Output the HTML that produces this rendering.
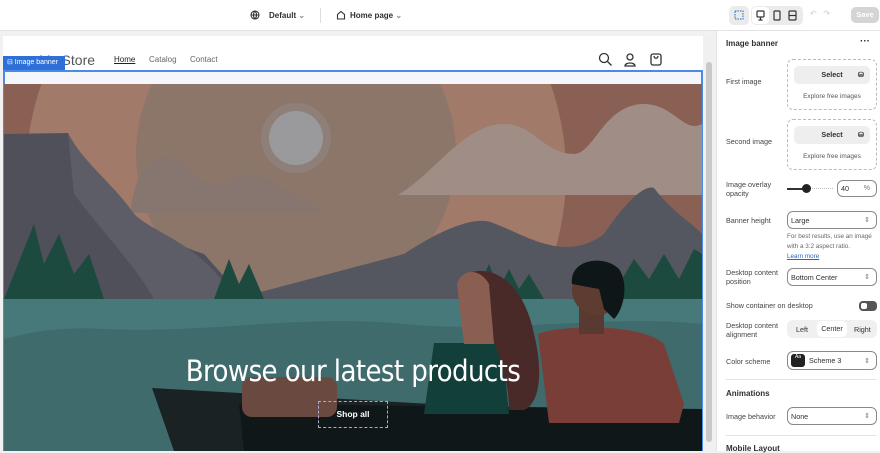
<!DOCTYPE html>
<html><head><meta charset="utf-8"><style>
*{box-sizing:border-box;margin:0;padding:0}
body{width:880px;height:451px;overflow:hidden;background:#f1f1f1;font-family:"Liberation Sans",sans-serif;position:relative;color:#303030}
.top{position:absolute;left:0;top:0;width:880px;height:31px;background:#fff;border-bottom:1px solid #e3e3e3}
.t{position:absolute;font-size:8px}
.frame{position:absolute;left:3px;top:36px;width:700px;height:415px;background:#fff}
.panel{position:absolute;left:716px;top:31px;width:164px;height:420px;background:#fff;border-left:1px solid #e3e3e3}
.lbl{position:absolute;left:9px;font-size:7.2px;color:#444;line-height:9px}
.box{position:absolute;border:1px solid #8a8a8a;border-radius:6px;background:#fff;font-size:7.2px;padding-left:3px;display:flex;align-items:center}
.dash{position:absolute;left:70px;width:90px;height:51px;border:1px dashed #bbb;border-radius:6px}
.sel{position:absolute;left:6px;top:6px;width:76px;height:18px;background:#eee;border-radius:5px;font-size:7.2px;font-weight:bold;text-align:center;line-height:18px}
.exp{position:absolute;left:0;width:100%;top:33px;text-align:center;font-size:6.5px;color:#555}
.ud{position:absolute;right:6px;font-size:7px;color:#777}
.hr{position:absolute;left:9px;right:4px;height:1px;background:#e3e3e3}
</style></head><body>
<div class="top">
 <svg style="position:absolute;left:250px;top:10px" width="10" height="10" fill="none" stroke="#333" stroke-width="1.1"><circle cx="5" cy="5" r="4"/><path d="M1 5h8M5 1c-2 2-2 6 0 8M5 1c2 2 2 6 0 8"/></svg>
 <div class="t" style="left:269px;top:11px;font-weight:bold;color:#303030">Default <span style="color:#888">⌄</span></div>
 <div style="position:absolute;left:320px;top:8px;width:1px;height:15px;background:#ddd"></div>
 <svg style="position:absolute;left:336px;top:10px" width="10" height="10" fill="none" stroke="#333" stroke-width="1.1"><path d="M1.5 9V4.5L5 1.5l3.5 3V9z"/></svg>
 <div class="t" style="left:350px;top:11px;font-weight:bold">Home page <span style="color:#888">⌄</span></div>
 <div style="position:absolute;left:729px;top:6px;width:20px;height:19px;background:#ebebeb;border-radius:5px"></div>
 <svg style="position:absolute;left:734px;top:10px" width="10" height="10" fill="none" stroke="#2563c9" stroke-width="1" stroke-dasharray="1.5 1"><rect x="1" y="1" width="8" height="8"/></svg>
 <div style="position:absolute;left:751px;top:6px;width:52px;height:19px;background:#ebebeb;border-radius:5px"></div>
 <div style="position:absolute;left:752px;top:7px;width:17px;height:17px;background:#fff;border-radius:4px"></div>
 <svg style="position:absolute;left:752px;top:7px" width="51" height="17" fill="none" stroke="#333" stroke-width="1.2"><rect x="5" y="4" width="7" height="6" rx="1"/><path d="M8.5 10v3M6.5 13h4"/><rect x="22" y="4" width="6" height="9" rx="1"/><rect x="37" y="4" width="7" height="9" rx="1"/><path d="M37 8.5h7"/></svg>
 <div style="position:absolute;left:810px;top:9px;font-size:8px;color:#ccc">↶ &nbsp; ↷</div>
 <div style="position:absolute;left:851px;top:7px;width:28px;height:16px;background:#d4d4d4;border-radius:5px;color:#fff;font-size:7.5px;font-weight:bold;text-align:center;line-height:16px">Save</div>
</div>
<div class="frame">
 <div style="position:absolute;left:36px;top:16px;font-size:14px;color:#555">My Store</div>
 <div style="position:absolute;left:111px;top:19px;font-size:8px;color:#222;text-decoration:underline">Home</div>
 <div style="position:absolute;left:146px;top:19px;font-size:8px;color:#666">Catalog</div>
 <div style="position:absolute;left:187px;top:19px;font-size:8px;color:#666">Contact</div>
 <svg style="position:absolute;left:594px;top:16px" width="70" height="16" fill="none" stroke="#333" stroke-width="1.3"><circle cx="7" cy="6" r="4.5"/><path d="M10.5 9.5l4 4"/><circle cx="33" cy="5" r="3"/><path d="M28 14c0-4 10-4 10 0z"/><rect x="54" y="2" width="10" height="11" rx="2"/><path d="M57 4c0 3 4 3 4 0"/></svg>
 <div style="position:absolute;left:0;top:20px;width:62px;height:14px;background:#2e6fd8;color:#fff;font-size:7px;line-height:14px;padding-left:4px">⊟ Image banner</div>
 <div style="position:absolute;left:0;top:34px;width:700px;height:381px;border:2px solid #4a8ae8"></div>
 <div style="position:absolute;left:2px;top:36px;width:696px;height:12px;background:#f4f6fb"></div>
 <div style="position:absolute;left:702px;top:0;width:8px;height:415px;background:#f0f0f0"><div style="position:absolute;left:1px;top:26px;width:6px;height:380px;background:#c9c9c9;border-radius:3px"></div></div>
</div>
<svg style="position:absolute;left:4px;top:84px" width="698" height="367" viewBox="0 0 698 367">
 <rect width="698" height="367" fill="#8a6055"/>
 <circle cx="292" cy="90" r="270" fill="#a27a6a"/>
 <circle cx="292" cy="70" r="160" fill="#8c766a"/>
 <circle cx="292" cy="54" r="35" fill="#8e7f78"/>
 <circle cx="292" cy="54" r="27" fill="#9a9a9c"/>
 <path d="M394 111 C430 90 460 40 500 40 C530 40 540 70 570 70 C590 70 600 20 640 20 C670 20 680 50 698 40 V111Z" fill="#a08e86"/>
 <path d="M127 129 C130 80 155 62 180 80 C195 95 210 110 230 95 C250 80 270 100 322 129Z" fill="#86766f"/>
 <path d="M0 50 L64 49 C80 80 100 110 130 130 C150 150 170 160 200 170 L240 215 H0Z" fill="#4f5059"/>
 <path d="M64 49 C80 80 110 100 130 130 C150 150 200 160 230 215 H150 C130 180 100 150 70 110Z" fill="#5c5d66"/>
 <path d="M230 215 L400 170 C430 150 470 130 489 139 C520 150 560 180 600 150 C620 120 640 100 650 104 C670 130 690 140 698 150 V215Z" fill="#555760"/>
 <path d="M0 215 L30 140 L40 180 L55 150 L70 190 L85 170 L100 215Z M210 215 L225 175 L235 200 L245 180 L260 215Z M470 215 L485 180 L495 205 L505 185 L515 205 L525 190 L540 215Z M580 215 L600 180 L615 200 L630 175 L645 195 L660 170 L675 195 L690 165 L698 170 V215Z" fill="#1d4a3e"/>
 <rect x="0" y="215" width="698" height="152" fill="#3f6b6c"/>
 <path d="M0 215 H698 V240 C600 230 500 250 400 240 C300 230 200 250 100 245 C50 242 20 250 0 255Z" fill="#47787a"/>
 <path d="M148 304 L690 335 V367 H170Z" fill="#1a2224"/>
 <path d="M235 320 L698 325 V367 H240Z" fill="#0f1719"/>
 <rect x="238" y="293" width="95" height="40" rx="10" fill="#6a4a40"/>
 <path d="M430 259 L498 259 L505 330 L420 330Z" fill="#123f39"/>
 <path d="M465 189 C490 180 520 200 530 250 C540 290 535 320 520 326 L505 326 C505 280 480 240 465 189Z" fill="#4a2a28"/>
 <path d="M453 200 C458 185 475 183 485 200 L490 260 L460 260Z" fill="#8a5e50"/>
 <path d="M534 250 C560 240 640 240 660 260 L680 320 L675 339 H545Z" fill="#7a3e38"/>
 <rect x="575" y="215" width="25" height="35" fill="#5a3a30"/>
 <circle cx="593" cy="206" r="25" fill="#5e3c32"/>
 <path d="M568 200 C565 175 600 170 615 185 C625 200 620 225 610 235 L600 225 L595 205Z" fill="#0e1617"/>
</svg>
<div style="position:absolute;left:4px;top:352px;width:698px;text-align:center;color:#fff;font-size:29px;font-family:'DejaVu Sans Condensed','Liberation Sans',sans-serif;letter-spacing:-0.6px;line-height:38px">Browse our latest products</div>
<div style="position:absolute;left:318px;top:401px;width:70px;height:27px;border:1px dashed #aac;color:#fff;font-size:8.5px;font-weight:bold;text-align:center;line-height:25px">Shop all</div>
<div class="panel">
 <div style="position:absolute;left:9px;top:8px;font-size:8px;font-weight:bold">Image banner</div>
 <div style="position:absolute;right:10px;top:7px;font-size:10px;font-weight:bold;line-height:8px">···</div>
 <div class="lbl" style="top:46px">First image</div>
 <div class="dash" style="top:28px"><div class="sel">Select<span style="position:absolute;right:6px">⛁</span></div><div class="exp">Explore free images</div></div>
 <div class="lbl" style="top:106px">Second image</div>
 <div class="dash" style="top:88px"><div class="sel">Select<span style="position:absolute;right:6px">⛁</span></div><div class="exp">Explore free images</div></div>
 <div class="lbl" style="top:149px">Image overlay<br>opacity</div>
 <div style="position:absolute;left:70px;top:157px;width:20px;height:2px;background:#333"></div>
 <div style="position:absolute;left:90px;top:157px;width:26px;height:1px;border-top:1px dotted #bbb"></div>
 <div style="position:absolute;left:85px;top:153px;width:9px;height:9px;border-radius:50%;background:#222"></div>
 <div class="box" style="left:120px;top:149px;width:40px;height:17px">40<span class="ud">%</span></div>
 <div class="lbl" style="top:185px">Banner height</div>
 <div class="box" style="left:70px;top:180px;width:90px;height:18px">Large<span class="ud">⇕</span></div>
 <div style="position:absolute;left:70px;top:201px;font-size:6.3px;color:#666;line-height:10px">For best results, use an image<br>with a 3:2 aspect ratio.<br><span style="color:#2563c9;text-decoration:underline">Learn more</span></div>
 <div class="lbl" style="top:237px">Desktop content<br>position</div>
 <div class="box" style="left:70px;top:237px;width:90px;height:18px">Bottom Center<span class="ud">⇕</span></div>
 <div class="lbl" style="top:270px">Show container on desktop</div>
 <div style="position:absolute;left:142px;top:270px;width:18px;height:10px;border-radius:4px;background:#555"><div style="position:absolute;left:2px;top:2px;width:6px;height:6px;border-radius:2px;background:#fff"></div></div>
 <div class="lbl" style="top:290px">Desktop content<br>alignment</div>
 <div style="position:absolute;left:70px;top:289px;width:90px;height:18px;background:#f0f0f0;border-radius:6px;font-size:7.2px">
  <span style="position:absolute;left:9px;top:5px">Left</span>
  <div style="position:absolute;left:30px;top:1px;width:30px;height:16px;background:#fff;border-radius:5px;text-align:center;line-height:16px">Center</div>
  <span style="position:absolute;left:67px;top:5px">Right</span></div>
 <div class="lbl" style="top:326px">Color scheme</div>
 <div class="box" style="left:70px;top:320px;width:90px;height:19px"><span style="display:inline-block;width:14px;height:13px;background:#222;border-radius:3px;margin-right:4px;color:#fff;font-size:5px;text-align:center">Aa</span>Scheme 3<span class="ud">⇕</span></div>
 <div class="hr" style="top:348px"></div>
 <div style="position:absolute;left:9px;top:358px;font-size:8px;font-weight:bold">Animations</div>
 <div class="lbl" style="top:381px">Image behavior</div>
 <div class="box" style="left:70px;top:376px;width:90px;height:18px">None<span class="ud">⇕</span></div>
 <div class="hr" style="top:404px"></div>
 <div style="position:absolute;left:9px;top:413px;font-size:8px;font-weight:bold">Mobile Layout</div>
</div>
</body></html>
